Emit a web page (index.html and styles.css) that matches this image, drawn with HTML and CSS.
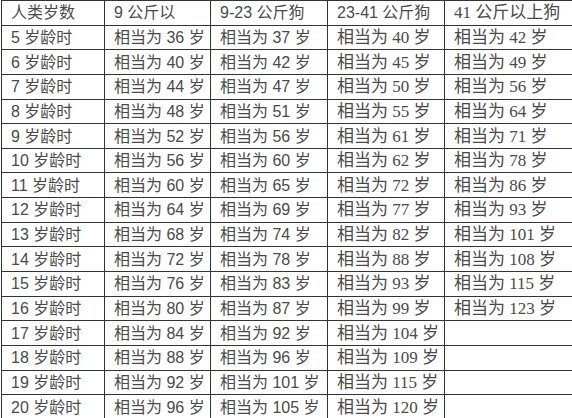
FILE: index.html
```html
<!DOCTYPE html>
<html lang="zh">
<head>
<meta charset="utf-8">
<link rel="stylesheet" href="styles.css">
</head>
<body>
<table class="age-table">
  <colgroup>
    <col class="c1"><col class="c2"><col class="c3"><col class="c4"><col class="c5">
  </colgroup>
  <tr><td class="s">人类岁数</td><td class="s">9 公斤以</td><td class="s">9-23 公斤狗</td><td class="s">23-41 公斤狗</td><td class="r">41 公斤以上狗</td></tr>
  <tr><td class="s">5 岁龄时</td><td class="s">相当为 36 岁</td><td class="s">相当为 37 岁</td><td class="r">相当为 40 岁</td><td class="r">相当为 42 岁</td></tr>
  <tr><td class="s">6 岁龄时</td><td class="s">相当为 40 岁</td><td class="s">相当为 42 岁</td><td class="r">相当为 45 岁</td><td class="r">相当为 49 岁</td></tr>
  <tr><td class="s">7 岁龄时</td><td class="s">相当为 44 岁</td><td class="s">相当为 47 岁</td><td class="r">相当为 50 岁</td><td class="r">相当为 56 岁</td></tr>
  <tr><td class="s">8 岁龄时</td><td class="s">相当为 48 岁</td><td class="s">相当为 51 岁</td><td class="r">相当为 55 岁</td><td class="r">相当为 64 岁</td></tr>
  <tr><td class="s">9 岁龄时</td><td class="s">相当为 52 岁</td><td class="s">相当为 56 岁</td><td class="r">相当为 61 岁</td><td class="r">相当为 71 岁</td></tr>
  <tr><td class="s">10 岁龄时</td><td class="s">相当为 56 岁</td><td class="s">相当为 60 岁</td><td class="r">相当为 62 岁</td><td class="r">相当为 78 岁</td></tr>
  <tr><td class="s">11 岁龄时</td><td class="s">相当为 60 岁</td><td class="s">相当为 65 岁</td><td class="r">相当为 72 岁</td><td class="r">相当为 86 岁</td></tr>
  <tr><td class="s">12 岁龄时</td><td class="s">相当为 64 岁</td><td class="s">相当为 69 岁</td><td class="r">相当为 77 岁</td><td class="r">相当为 93 岁</td></tr>
  <tr><td class="s">13 岁龄时</td><td class="s">相当为 68 岁</td><td class="s">相当为 74 岁</td><td class="r">相当为 82 岁</td><td class="r">相当为 101 岁</td></tr>
  <tr><td class="s">14 岁龄时</td><td class="s">相当为 72 岁</td><td class="s">相当为 78 岁</td><td class="r">相当为 88 岁</td><td class="r">相当为 108 岁</td></tr>
  <tr><td class="s">15 岁龄时</td><td class="s">相当为 76 岁</td><td class="s">相当为 83 岁</td><td class="r">相当为 93 岁</td><td class="r">相当为 115 岁</td></tr>
  <tr><td class="s">16 岁龄时</td><td class="s">相当为 80 岁</td><td class="s">相当为 87 岁</td><td class="r">相当为 99 岁</td><td class="r">相当为 123 岁</td></tr>
  <tr><td class="s">17 岁龄时</td><td class="s">相当为 84 岁</td><td class="s">相当为 92 岁</td><td class="r">相当为 104 岁</td><td class="r"></td></tr>
  <tr><td class="s">18 岁龄时</td><td class="s">相当为 88 岁</td><td class="s">相当为 96 岁</td><td class="r">相当为 109 岁</td><td class="r"></td></tr>
  <tr><td class="s">19 岁龄时</td><td class="s">相当为 92 岁</td><td class="s">相当为 101 岁</td><td class="r">相当为 115 岁</td><td class="r"></td></tr>
  <tr><td class="s">20 岁龄时</td><td class="s">相当为 96 岁</td><td class="s">相当为 105 岁</td><td class="r">相当为 120 岁</td><td class="r"></td></tr>
</table>
</body>
</html>
```

FILE: styles.css
```css
html, body {
  margin: 0;
  padding: 0;
  background: #fff;
  overflow: hidden;
}
.age-table {
  border-collapse: collapse;
  table-layout: fixed;
  width: 574px;
  height: 420px;
  margin-left: 1px;
  color: #4a4a4a;
  font-size: 16px;
}
.c1 { width: 103px; }
.c2 { width: 106px; }
.c3 { width: 117px; }
.c4 { width: 117px; }
.c5 { width: 131px; }
.age-table td {
  border: 1px solid #333;
  padding: 1px 0 0 9px;
  white-space: nowrap;
  line-height: 20px;
  vertical-align: middle;
}
.s { font-family: "Liberation Sans", "Noto Sans CJK SC", sans-serif; }
.r { font-family: "Liberation Serif", "Noto Sans CJK SC", serif; font-size: 17px; }
```
